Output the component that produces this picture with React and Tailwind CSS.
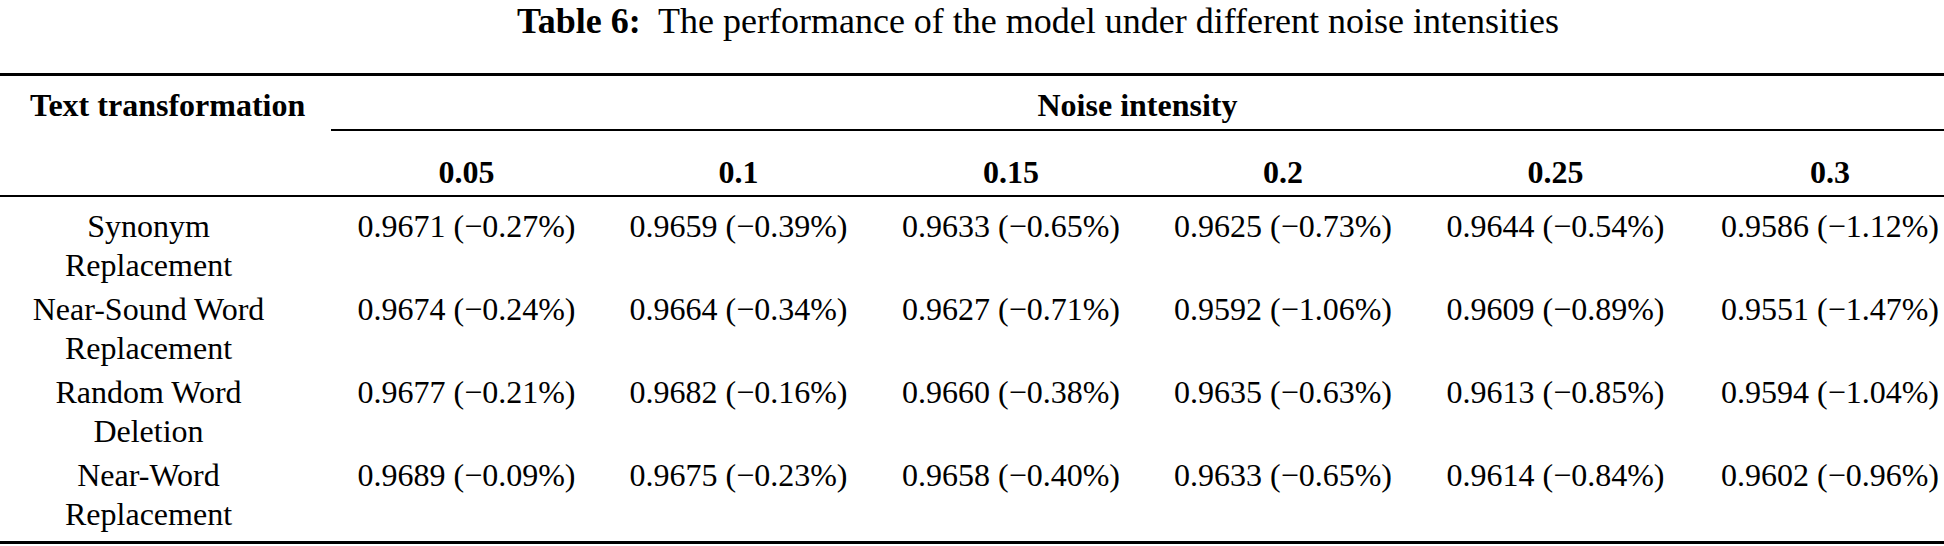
import React from "react";

const LEVELS = ["0.05", "0.1", "0.15", "0.2", "0.25", "0.3"];

const ROWS = [
  {
    label: ["Synonym", "Replacement"],
    values: ["0.9671 (−0.27%)", "0.9659 (−0.39%)", "0.9633 (−0.65%)", "0.9625 (−0.73%)", "0.9644 (−0.54%)", "0.9586 (−1.12%)"],
  },
  {
    label: ["Near-Sound Word", "Replacement"],
    values: ["0.9674 (−0.24%)", "0.9664 (−0.34%)", "0.9627 (−0.71%)", "0.9592 (−1.06%)", "0.9609 (−0.89%)", "0.9551 (−1.47%)"],
  },
  {
    label: ["Random Word", "Deletion"],
    values: ["0.9677 (−0.21%)", "0.9682 (−0.16%)", "0.9660 (−0.38%)", "0.9635 (−0.63%)", "0.9613 (−0.85%)", "0.9594 (−1.04%)"],
  },
  {
    label: ["Near-Word", "Replacement"],
    values: ["0.9689 (−0.09%)", "0.9675 (−0.23%)", "0.9658 (−0.40%)", "0.9633 (−0.65%)", "0.9614 (−0.84%)", "0.9602 (−0.96%)"],
  },
];

// column template shared by every row
const COLS = "grid grid-cols-[331px_271px_273px_272px_272px_273px_1fr]";

export default function App() {
  return (
    <div className="w-[1944px] h-[546px] bg-white text-black font-['Liberation_Serif',serif] overflow-hidden">
      {/* Caption */}
      <div className="h-[73px] text-center text-[36px] leading-[42px] pl-[132px]">
        <span className="font-bold">Table 6:</span>
        <span>&nbsp; The performance of the model under different noise intensities</span>
      </div>

      <div className="border-t-[3px] border-black text-[32px] leading-[39px]">
        {/* Header row 1 */}
        <div className={COLS}>
          <div className="pl-[30px] pt-[10px] font-bold">Text transformation</div>
          <div className="col-span-6 pt-[10px] pb-[4px] text-center font-bold border-b-2 border-black">
            Noise intensity
          </div>
        </div>

        {/* Header row 2 */}
        <div className={`${COLS} border-b-2 border-black`}>
          <div />
          {LEVELS.map((lvl, i) => (
            <div
              key={lvl}
              className={`pt-[22px] pb-[3px] text-center font-bold ${i === 5 ? "pl-[24px]" : ""}`}
            >
              {lvl}
            </div>
          ))}
        </div>

        {/* Body */}
        <div className="pt-[10px] pb-[7px] border-b-[3px] border-black">
          {ROWS.map((row, r) => (
            <div key={r} className={`${COLS} ${r > 0 ? "pt-[5px]" : ""}`}>
              <div className="pr-[34px] text-center">
                {row.label[0]}
                <br />
                {row.label[1]}
              </div>
              {row.values.map((v, i) => (
                <div key={i} className={`text-center whitespace-nowrap ${i === 5 ? "pl-[24px]" : ""}`}>
                  {v}
                </div>
              ))}
            </div>
          ))}
        </div>
      </div>
    </div>
  );
}
